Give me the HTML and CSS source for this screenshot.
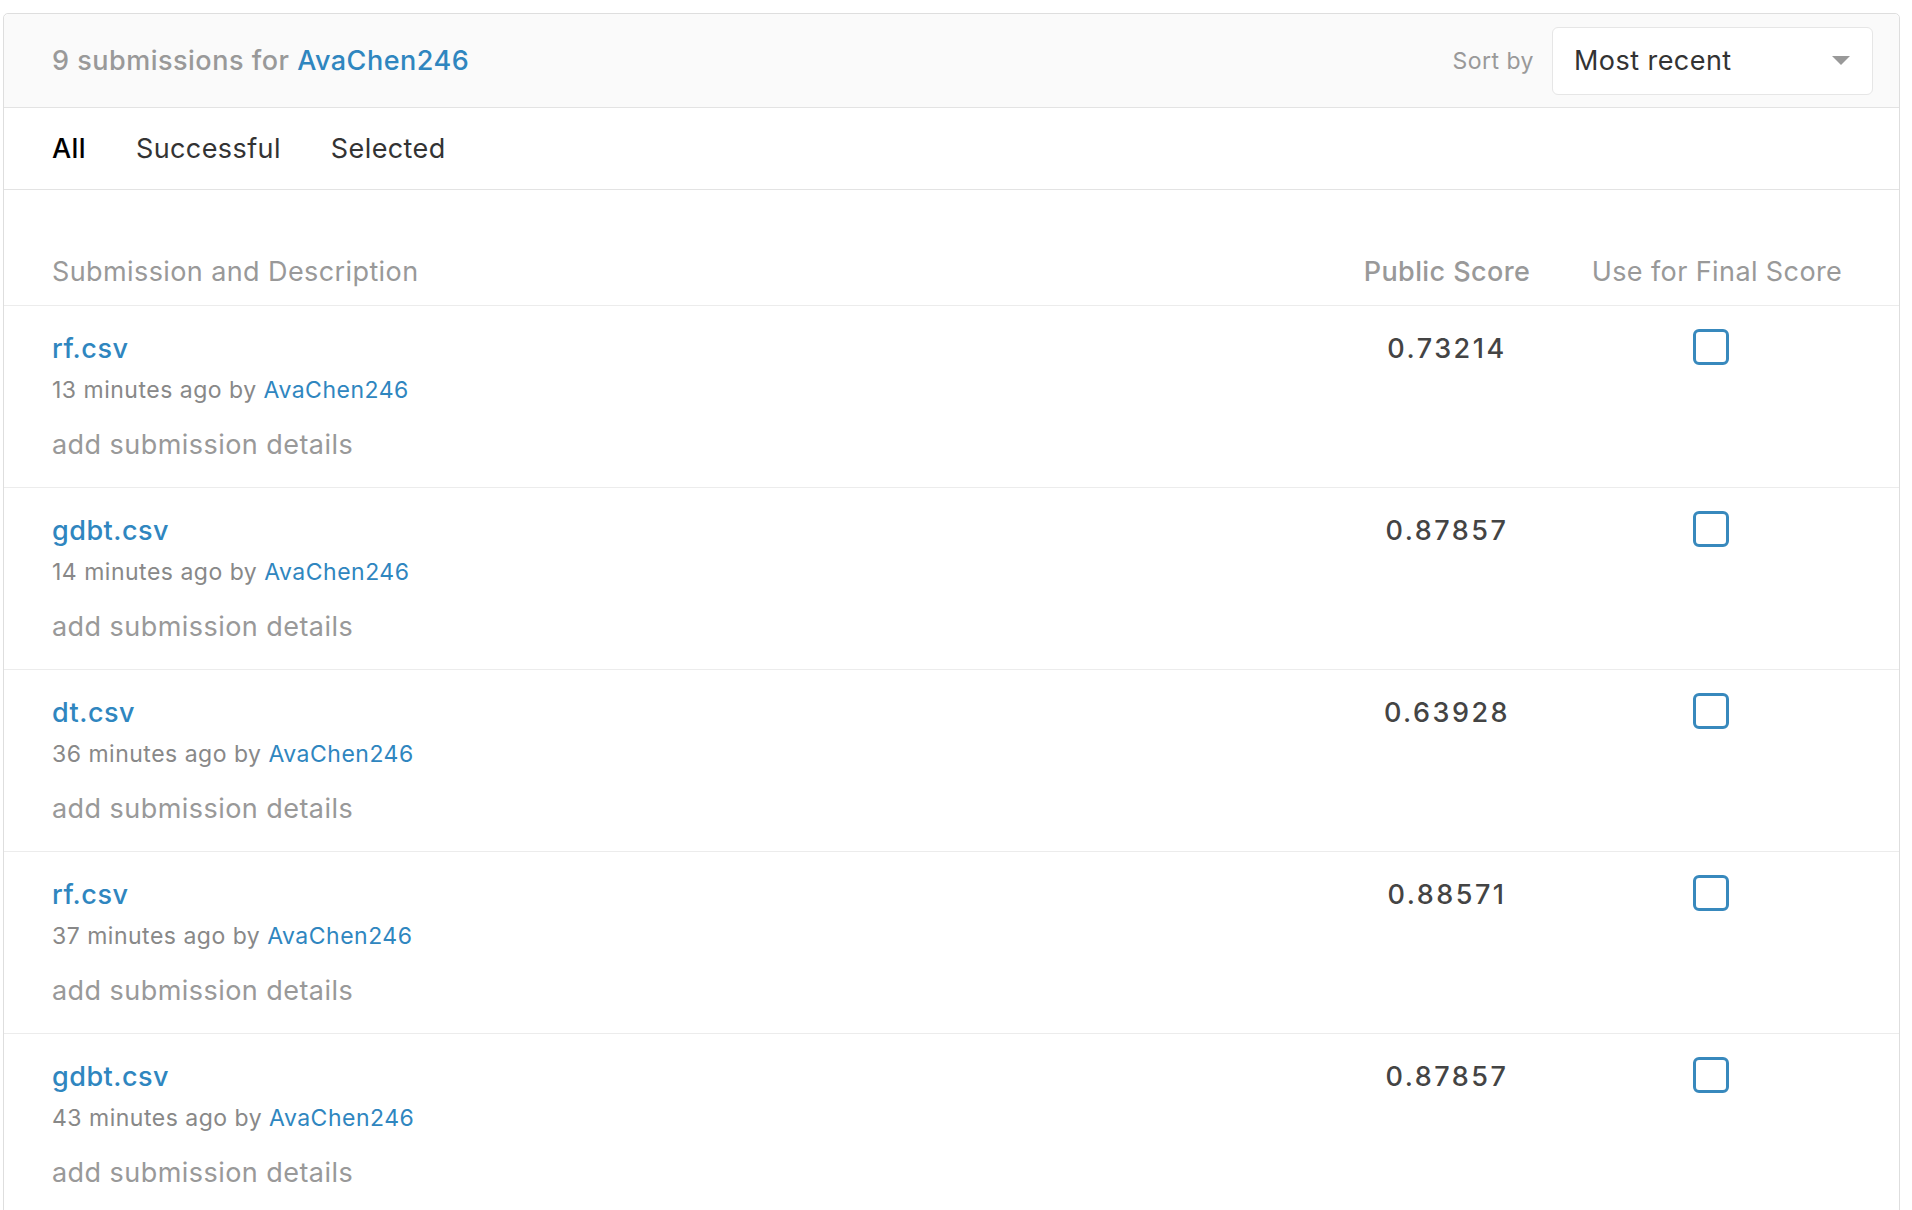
FILE: index.html
```html
<!DOCTYPE html>
<html lang="en">
<head>
<meta charset="utf-8">
<title>Submissions</title>
<link rel="stylesheet" href="styles.css">
</head>
<body>
<div class="card">
  <div class="card-header">
    <div class="count"><span class="muted">9 submissions for</span> <a class="link strong" href="#">AvaChen246</a></div>
    <div class="sort">
      <span class="sort-label">Sort by</span>
      <div class="select">
        <span>Most recent</span>
        <span class="caret"></span>
      </div>
    </div>
  </div>
  <div class="tabs">
    <span class="tab active">All</span>
    <span class="tab">Successful</span>
    <span class="tab">Selected</span>
  </div>
  <div class="table">
    <div class="thead">
      <div class="c-desc">Submission and Description</div>
      <div class="c-score">Public Score</div>
      <div class="c-final">Use for Final Score</div>
    </div>

    <div class="row">
      <div class="c-desc">
        <a class="link title" href="#">rf.csv</a>
        <div class="meta">13 minutes ago by <a class="link" href="#">AvaChen246</a></div>
        <div class="details">add submission details</div>
      </div>
      <div class="c-score score">0.73214</div>
      <div class="c-final"><span class="check"></span></div>
    </div>

    <div class="row">
      <div class="c-desc">
        <a class="link title" href="#">gdbt.csv</a>
        <div class="meta">14 minutes ago by <a class="link" href="#">AvaChen246</a></div>
        <div class="details">add submission details</div>
      </div>
      <div class="c-score score">0.87857</div>
      <div class="c-final"><span class="check"></span></div>
    </div>

    <div class="row">
      <div class="c-desc">
        <a class="link title" href="#">dt.csv</a>
        <div class="meta">36 minutes ago by <a class="link" href="#">AvaChen246</a></div>
        <div class="details">add submission details</div>
      </div>
      <div class="c-score score">0.63928</div>
      <div class="c-final"><span class="check"></span></div>
    </div>

    <div class="row">
      <div class="c-desc">
        <a class="link title" href="#">rf.csv</a>
        <div class="meta">37 minutes ago by <a class="link" href="#">AvaChen246</a></div>
        <div class="details">add submission details</div>
      </div>
      <div class="c-score score">0.88571</div>
      <div class="c-final"><span class="check"></span></div>
    </div>

    <div class="row">
      <div class="c-desc">
        <a class="link title" href="#">gdbt.csv</a>
        <div class="meta">43 minutes ago by <a class="link" href="#">AvaChen246</a></div>
        <div class="details">add submission details</div>
      </div>
      <div class="c-score score">0.87857</div>
      <div class="c-final"><span class="check"></span></div>
    </div>
  </div>
</div>
</body>
</html>
```

FILE: styles.css
```css
html, body {
  margin: 0;
  padding: 0;
  background: #ffffff;
}
body {
  font-family: Inter, "Noto Sans", "Liberation Sans", sans-serif;
  color: #333;
  padding: 13px 12px 0 3px;
}
.card {
  border: 1px solid #dedede;
  border-radius: 5px;
  min-height: 1300px;
  background: #fff;
}
.link {
  color: #2f86bf;
  text-decoration: none;
}
.strong { font-weight: 500; }
.muted { color: #999; }
.card-header {
  height: 93px;
  background: #fafafa;
  border-bottom: 1px solid #e3e3e3;
  border-radius: 5px 5px 0 0;
  display: flex;
  align-items: center;
  justify-content: space-between;
  padding: 0 26px 0 48px;
}
.count {
  font-size: 27px;
  font-weight: 500;
  letter-spacing: 0.5px;
}
.sort {
  display: flex;
  align-items: center;
  gap: 18px;
}
.sort-label {
  color: #999;
  font-size: 23px;
  letter-spacing: 0.5px;
}
.select {
  width: 321px;
  height: 68px;
  box-sizing: border-box;
  border: 1px solid #e6e6e6;
  border-radius: 6px;
  background: #fff;
  display: flex;
  align-items: center;
  justify-content: space-between;
  padding: 0 22px 0 21px;
  font-size: 27px;
  letter-spacing: 0.45px;
  color: #333;
}
.caret {
  width: 0;
  height: 0;
  border-left: 9px solid transparent;
  border-right: 9px solid transparent;
  border-top: 9px solid #999;
}
.tabs {
  height: 81px;
  border-bottom: 1px solid #e3e3e3;
  display: flex;
  align-items: center;
  gap: 50px;
  padding: 0 48px;
  font-size: 27px;
  letter-spacing: 0.4px;
}
.tab { color: #333; }
.tab.active { color: #000; font-weight: 500; }

.thead, .row {
  display: grid;
  grid-template-columns: 1fr 262px 290px;
  padding: 0 31px 0 48px;
  border-bottom: 1px solid #ececec;
}
.thead {
  padding-top: 67px;
  padding-bottom: 18px;
  font-size: 27px;
  letter-spacing: 0.4px;
  color: #999;
  line-height: 30px;
}
.thead .c-score { font-weight: 500; }
.c-score, .c-final { text-align: center; }
.row {
  padding-top: 26px;
  padding-bottom: 25px;
}
.title {
  display: block;
  font-size: 27px;
  font-weight: 500;
  letter-spacing: 0.5px;
  line-height: 34px;
}
.meta {
  margin-top: 9px;
  font-size: 23px;
  letter-spacing: 0.5px;
  line-height: 30px;
  color: #888;
}
.details {
  margin-top: 23px;
  font-size: 27px;
  letter-spacing: 0.45px;
  line-height: 34px;
  color: #999;
}
.score {
  font-size: 27px;
  font-weight: 500;
  color: #444;
  line-height: 34px;
  letter-spacing: 2.5px;
}
.c-final {
  display: flex;
  justify-content: center;
  padding-right: 24px;
}
.thead .c-final {
  padding-right: 12px;
}
.check {
  display: block;
  width: 36px;
  height: 36px;
  box-sizing: border-box;
  border: 3px solid #3889bd;
  border-radius: 6px;
  margin-top: -3px;
}
```
